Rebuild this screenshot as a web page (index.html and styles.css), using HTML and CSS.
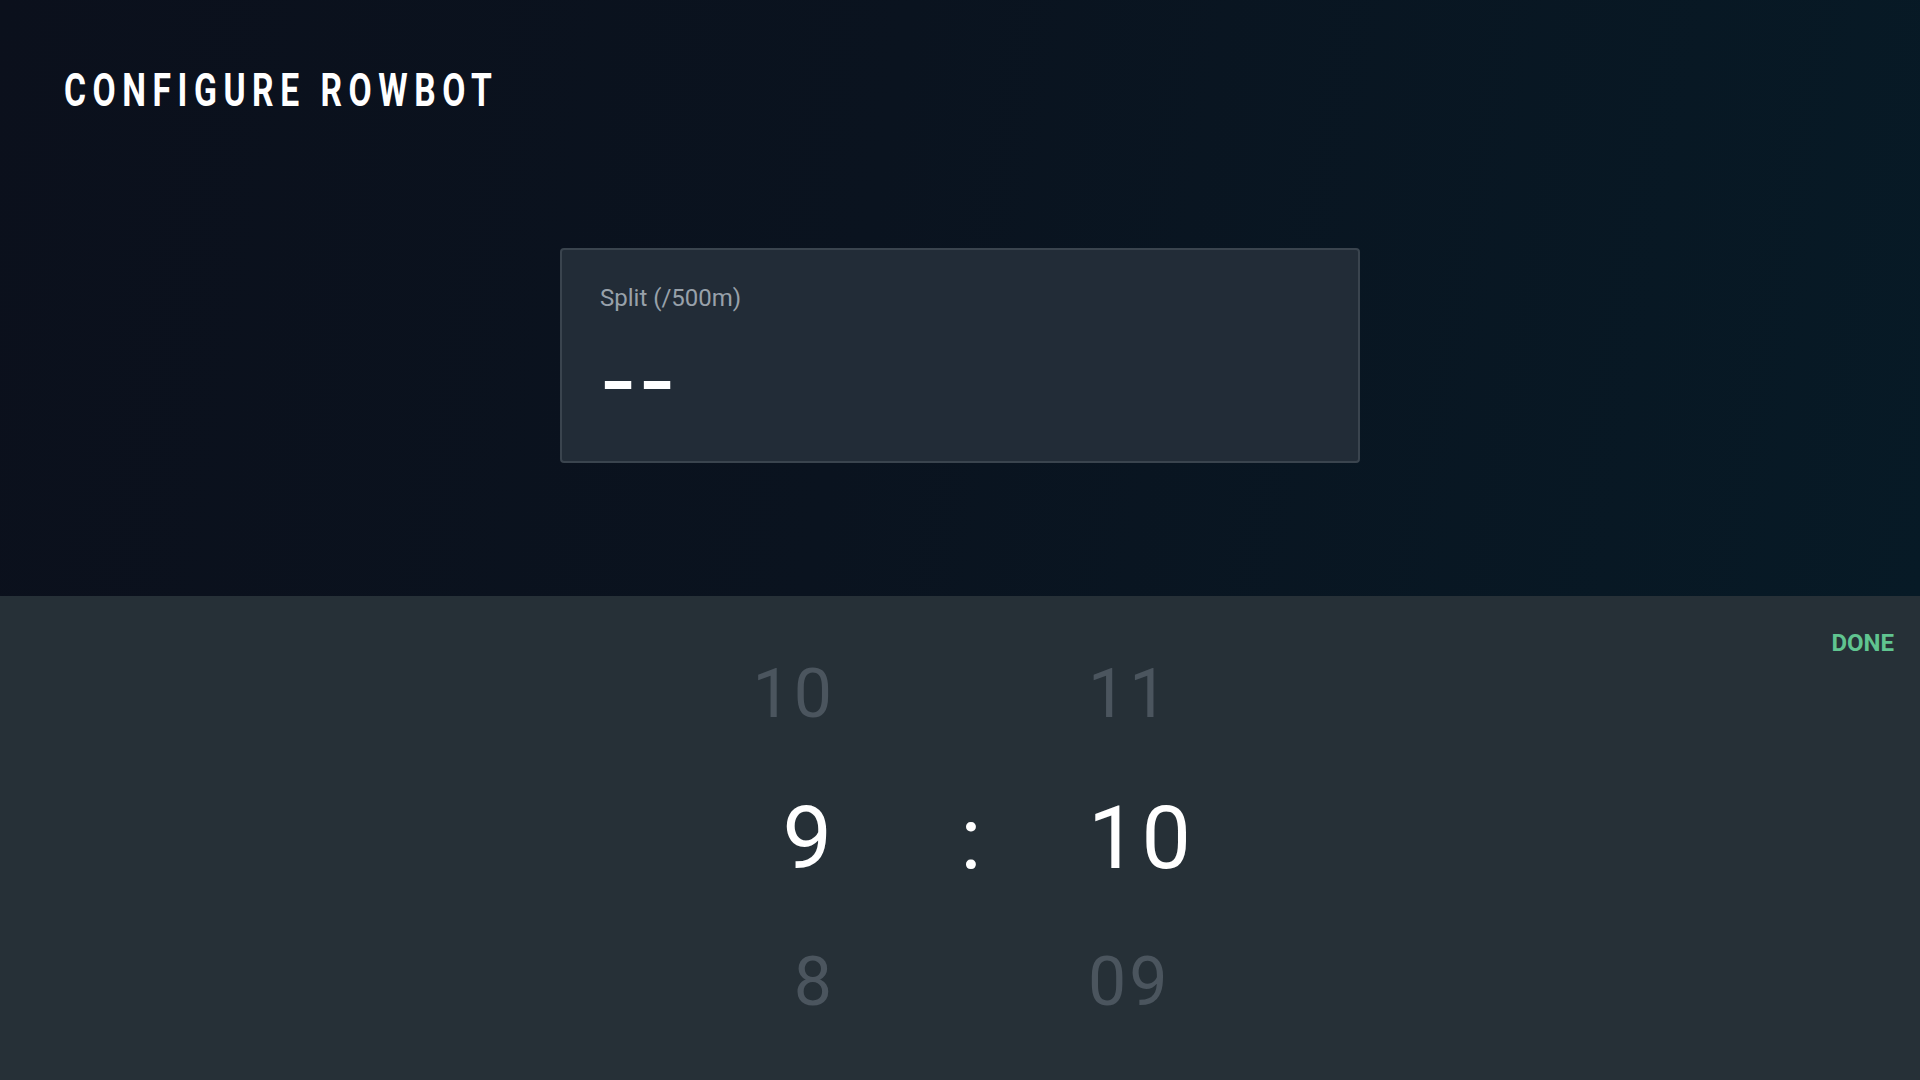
FILE: index.html
```html
<!DOCTYPE html>
<html lang="en">
<head>
<meta charset="utf-8">
<title>Configure Rowbot</title>
<link rel="stylesheet" href="styles.css">
</head>
<body>
<div class="app">
  <section class="top">
    <h1 class="title">CONFIGURE ROWBOT</h1>
    <div class="card">
      <div class="card-label">Split (/500m)</div>
      <div class="card-value">--</div>
    </div>
  </section>
  <section class="panel">
    <div class="spacer"></div>
    <div class="picker">
      <div class="col col-left">
        <div class="cell dim">10</div>
        <div class="cell active">9</div>
        <div class="cell dim">8</div>
      </div>
      <div class="col col-sep">
        <div class="cell"></div>
        <div class="cell active">:</div>
        <div class="cell"></div>
      </div>
      <div class="col col-right">
        <div class="cell dim">11</div>
        <div class="cell active">10</div>
        <div class="cell dim">09</div>
      </div>
    </div>
    <div class="actions">
      <button class="done">DONE</button>
    </div>
  </section>
</div>
</body>
</html>
```

FILE: styles.css
```css
html, body {
  margin: 0;
  padding: 0;
}
body {
  width: 1920px;
  height: 1080px;
  overflow: hidden;
  font-family: Roboto, "Liberation Sans", sans-serif;
  background: #263037;
}
.app {
  display: flex;
  flex-direction: column;
  height: 1080px;
}
.top {
  height: 596px;
  box-sizing: border-box;
  background: linear-gradient(100deg, #0b101c 0%, #0a131f 45%, #071a26 100%);
  padding: 68px 0 0 64px;
  display: flex;
  flex-direction: column;
}
.title {
  margin: 0;
  font-family: Roboto, sans-serif;
  font-weight: 700;
  font-size: 46px;
  line-height: 45px;
  letter-spacing: 9px;
  color: #ffffff;
  transform: scaleX(0.73);
  transform-origin: left top;
  white-space: nowrap;
}
.card {
  align-self: center;
  margin: 135px 0 0 -64px;
  width: 800px;
  height: 215px;
  box-sizing: border-box;
  background: #222c37;
  border: 2px solid #3a444e;
  border-radius: 4px;
  padding: 34px 38px;
}
.card-label {
  font-size: 24px;
  line-height: 28px;
  color: #98a1aa;
}
.card-value {
  margin-top: 36px;
  font-family: "DejaVu Sans", sans-serif;
  font-size: 100px;
  line-height: 60px;
  height: 60px;
  color: #ffffff;
  letter-spacing: 3px;
}
.panel {
  flex: 1;
  background: #263037;
  display: grid;
  grid-template-columns: 1fr auto 1fr;
  padding: 26px 26px 0 26px;
}
.picker {
  display: flex;
}
.col {
  display: flex;
  flex-direction: column;
}
.col-left {
  width: 110px;
  text-align: right;
}
.col-sep {
  width: 80px;
  margin: 0 77px 0 99px;
  text-align: center;
}
.col-right {
  width: 110px;
  text-align: left;
}
.cell {
  height: 144px;
  line-height: 144px;
  white-space: nowrap;
}
.dim {
  font-size: 68px;
  letter-spacing: 3px;
  color: #4b555e;
}
.col-left .dim {
  margin-right: -3px;
}
.active {
  font-size: 88px;
  color: #ffffff;
}
.col-right .active {
  letter-spacing: 4px;
}
.actions {
  display: flex;
  justify-content: flex-end;
  align-items: flex-start;
}
.done {
  margin-top: 9px;
  padding: 0;
  border: none;
  background: none;
  font-family: Roboto, sans-serif;
  font-weight: 700;
  font-size: 24px;
  line-height: 24px;
  color: #60c490;
  cursor: pointer;
}
```
